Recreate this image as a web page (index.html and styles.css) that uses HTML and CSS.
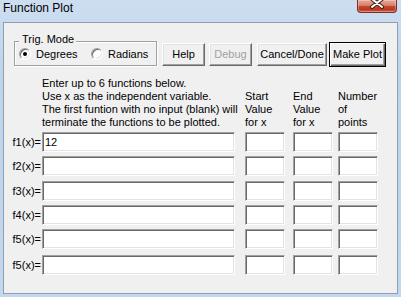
FILE: index.html
```html
<!DOCTYPE html>
<html>
<head>
<meta charset="utf-8">
<title>Function Plot</title>
<link rel="stylesheet" href="styles.css">
</head>
<body>
<div class="window">
  <div class="titlebar">
    <span class="title">Function Plot</span>
    <div class="close">
      <svg width="38" height="12" viewBox="0 0 38 12">
        <path d="M14 -1 L24 7 M24 -1 L14 7" stroke="#4a1f18" stroke-width="4" stroke-linecap="round" fill="none"/>
        <path d="M14 -1 L24 7 M24 -1 L14 7" stroke="#ffffff" stroke-width="2" stroke-linecap="round" fill="none"/>
      </svg>
    </div>
  </div>
  <div class="client">
    <div class="toprow">
      <fieldset class="group">
        <legend>Trig. Mode</legend>
        <div class="radios">
          <label class="opt deg"><span class="radio on"></span>Degrees</label>
          <label class="opt"><span class="radio"></span>Radians</label>
        </div>
      </fieldset>
      <button class="btn help">Help</button>
      <button class="btn debug" disabled>Debug</button>
      <button class="btn cancel">Cancel/Done</button>
      <button class="btn make">Make Plot</button>
    </div>
    <div class="header">
      <div class="desc">Enter up to 6 functions below.<br>Use x as the independent variable.<br>The first funtion with no input (blank) will<br>terminate the functions to be plotted.</div>
      <div class="hdr c-start">Start<br>Value<br>for x</div>
      <div class="hdr c-end">End<br>Value<br>for x</div>
      <div class="hdr c-num">Number<br>of<br>points</div>
    </div>
    <div class="rows">
      <div class="row"><span class="label">f1(x)=</span><input class="field fn" type="text" value="12"><input class="field c-start" type="text"><input class="field c-end" type="text"><input class="field c-num" type="text"></div>
      <div class="row"><span class="label">f2(x)=</span><input class="field fn" type="text"><input class="field c-start" type="text"><input class="field c-end" type="text"><input class="field c-num" type="text"></div>
      <div class="row"><span class="label">f3(x)=</span><input class="field fn" type="text"><input class="field c-start" type="text"><input class="field c-end" type="text"><input class="field c-num" type="text"></div>
      <div class="row"><span class="label">f4(x)=</span><input class="field fn" type="text"><input class="field c-start" type="text"><input class="field c-end" type="text"><input class="field c-num" type="text"></div>
      <div class="row"><span class="label">f5(x)=</span><input class="field fn" type="text"><input class="field c-start" type="text"><input class="field c-end" type="text"><input class="field c-num" type="text"></div>
      <div class="row"><span class="label">f5(x)=</span><input class="field fn" type="text"><input class="field c-start" type="text"><input class="field c-end" type="text"><input class="field c-num" type="text"></div>
    </div>
  </div>
</div>
</body>
</html>
```

FILE: styles.css
```css
* { box-sizing: border-box; }

body {
  margin: 0;
  font-family: "Liberation Sans", Arial, sans-serif;
  color: #000;
}

.window {
  width: 401px;
  height: 297px;
  display: flex;
  flex-direction: column;
  overflow: hidden;
  background: linear-gradient(#cddef1, #bed4ec 25%, #c3d8ee);
}

.titlebar {
  height: 22px;
  flex: none;
  display: flex;
  align-items: flex-start;
}

.title {
  font-size: 12px;
  line-height: 14px;
  padding: 1px 0 0 3px;
}

.close {
  margin-left: auto;
  margin-right: 4px;
  width: 40px;
  height: 13px;
  border: 1px solid #7a3024;
  border-top: none;
  border-radius: 0 0 4px 4px;
  background: linear-gradient(#e8a898 0%, #d9806c 45%, #c5472f 52%, #b9391f 80%, #d4664a 100%);
  box-shadow: inset 0 0 0 1px rgba(255, 255, 255, 0.3);
}

.close svg { display: block; }

.client {
  flex: 1;
  margin: 0 3px 3px;
  background: #f0f0f0;
  border: 1px solid #8e9fb3;
  font-size: 11px;
  line-height: 13px;
}

.toprow {
  display: flex;
  align-items: flex-start;
  height: 44px;
  padding: 10px 0 0 10px;
}

.group {
  margin: 0;
  width: 143px;
  min-width: 0;
  padding: 0 4px 5px;
  border: 1px solid #a0a0a0;
  box-shadow: inset 1px 1px 0 #fff, 1px 1px 0 #fff;
}

.group legend {
  padding: 0 2px 4px 3px;
  font-size: 11px;
  line-height: 13px;
  background: #f0f0f0;
}

.radios {
  display: flex;
  align-items: center;
  height: 12px;
  margin-top: -2px;
  line-height: 12px;
}

.opt {
  display: flex;
  align-items: center;
  gap: 5px;
}

.opt.deg { width: 72px; }

.radio {
  position: relative;
  flex: none;
  width: 12px;
  height: 12px;
  border-radius: 50%;
  background: #fff;
  border: 1px solid;
  border-color: #a0a0a0 #fff #fff #a0a0a0;
  box-shadow: inset 1px 1px 0 #696969, inset -1px -1px 0 #e3e3e3;
}

.radio.on::after {
  content: "";
  position: absolute;
  left: 3px;
  top: 3px;
  width: 4px;
  height: 4px;
  border-radius: 50%;
  background: #000;
}

.btn {
  font: 11px/13px "Liberation Sans", Arial, sans-serif;
  height: 23px;
  margin-top: 10px;
  padding: 0;
  color: #000;
  background: #f0f0f0;
  border: 1px solid;
  border-color: #fff #696969 #696969 #fff;
  box-shadow: inset -1px -1px 0 #a0a0a0, inset 1px 1px 0 #e3e3e3;
  white-space: nowrap;
}

.help { margin-left: 5px; width: 43px; }
.debug { margin-left: 4px; width: 43px; color: #a0a0a0; }
.cancel { margin-left: 5px; width: 70px; }

.make {
  margin-left: 2px;
  margin-top: 9px;
  width: 57px;
  height: 25px;
  border-color: #000;
  box-shadow: inset 1px 1px 0 #fff, inset -1px -1px 0 #696969, inset -2px -2px 0 #a0a0a0;
}

.header {
  display: flex;
  margin-top: 10px;
  padding-left: 38px;
}

.desc {
  width: 193px;
  white-space: nowrap;
}

.hdr {
  width: 40px;
  padding-top: 13px;
  white-space: nowrap;
}

.c-start { margin-left: 10px; }
.c-end { margin-left: 8px; }
.c-num { margin-left: 5px; }

.rows { margin-top: 3px; }

.row {
  display: flex;
  align-items: center;
  height: 20px;
  margin-top: 4px;
}

.row:first-child { margin-top: 0; }
.row:nth-child(3) { margin-top: 5px; }
.row:nth-child(6) { margin-top: 6px; }

.label {
  width: 37px;
  margin-right: 1px;
  text-align: right;
  white-space: nowrap;
}

.field {
  height: 20px;
  width: 40px;
  margin-top: 0;
  margin-bottom: 0;
  padding: 0 2px;
  font: 11px "Liberation Sans", Arial, sans-serif;
  color: #000;
  background: #fff;
  border: 1px solid;
  border-color: #a0a0a0 #fff #fff #a0a0a0;
  box-shadow: inset 1px 1px 0 #696969, inset -1px -1px 0 #e3e3e3;
  outline: none;
}

.field.fn { width: 193px; }
```
